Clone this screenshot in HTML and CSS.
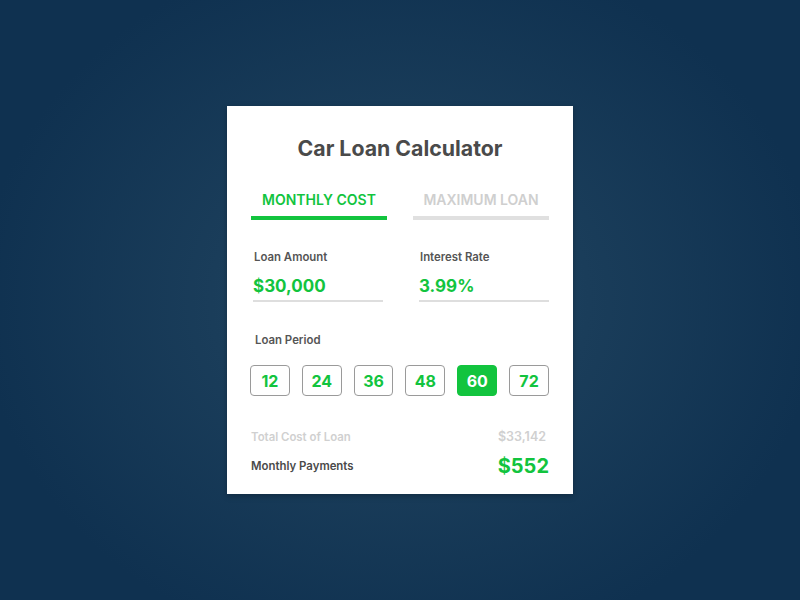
FILE: index.html
```html
<!DOCTYPE html>
<html>
<head>
<meta charset="utf-8">
<link rel="stylesheet" href="styles.css">
</head>
<body>
<div class="card">
  <h1 class="title">Car Loan Calculator</h1>
  <div class="tabs">
    <div class="tab active">MONTHLY COST</div>
    <div class="tab">MAXIMUM LOAN</div>
  </div>
  <div class="fields">
    <div class="field">
      <div class="label">Loan Amount</div>
      <div class="value">$30,000</div>
    </div>
    <div class="field">
      <div class="label">Interest Rate</div>
      <div class="value">3.99%</div>
    </div>
  </div>
  <div class="period-label label">Loan Period</div>
  <div class="periods">
    <div class="period">12</div>
    <div class="period">24</div>
    <div class="period">36</div>
    <div class="period">48</div>
    <div class="period selected">60</div>
    <div class="period">72</div>
  </div>
  <div class="row total">
    <span>Total Cost of Loan</span>
    <span class="total-value">$33,142</span>
  </div>
  <div class="row monthly">
    <span>Monthly Payments</span>
    <span class="monthly-value">$552</span>
  </div>
</div>
</body>
</html>
```
FILE: styles.css
```css
html, body {
  margin: 0;
  height: 100%;
}
body {
  width: 800px;
  height: 600px;
  background: radial-gradient(ellipse 420px 360px at 400px 300px, #234a66 0%, #1a3d5a 45%, #0f3150 100%);
  display: flex;
  align-items: center;
  justify-content: center;
  font-family: "Inter", "Liberation Sans", sans-serif;
  font-weight: 700;
}
.card {
  width: 346px;
  height: 388px;
  box-sizing: border-box;
  background: #fff;
  box-shadow: 0 2px 6px rgba(0,0,0,0.25);
  padding: 28px 24px 0 24px;
}
.title {
  margin: 0;
  text-align: center;
  font-size: 21.3px;
  font-weight: 700;
  color: #4a4a4a;
  line-height: 28px;
}
.tabs {
  display: flex;
  gap: 26px;
  margin-top: 29px;
}
.tab {
  width: 136px;
  text-align: center;
  font-size: 14px;
  font-weight: 600;
  color: #cfcfcf;
  padding-top: 0;
  padding-bottom: 8px;
  line-height: 17px;
  border-bottom: 4px solid #e0e0e0;
}
.tab.active {
  color: #12c43e;
  border-bottom-color: #12c43e;
}
.fields {
  display: flex;
  gap: 36px;
  margin: 30px 0 0 2px;
}
.field {
  width: 130px;
  border-bottom: 2px solid #dedede;
}
.label {
  font-size: 11.4px;
  font-weight: 600;
  color: #555;
  line-height: 14px;
  padding-left: 1px;
}
.value {
  font-size: 17px;
  color: #12c43e;
  line-height: 22px;
  margin-top: 11px;
  padding-bottom: 3px;
}
.period-label {
  margin: 31px 0 0 3px;
}
.periods {
  display: flex;
  gap: 12px;
  margin: 18px 0 0 -1px;
}
.period {
  width: 40px;
  height: 31px;
  box-sizing: border-box;
  border: 1px solid #9a9a9a;
  border-radius: 4px;
  display: flex;
  align-items: center;
  justify-content: center;
  font-size: 16px;
  color: #12c43e;
}
.period.selected {
  background: #12c43e;
  border-color: #12c43e;
  color: #fff;
}
.row {
  display: flex;
  justify-content: space-between;
  align-items: center;
  font-size: 11.4px;
  font-weight: 600;
  line-height: 16px;
}
.total {
  margin-top: 33px;
  color: #d0d0d0;
  padding-right: 3px;
}
.total-value {
  font-size: 12.5px;
}
.monthly {
  margin-top: 8px;
  color: #4a4a4a;
  line-height: 26px;
}
.monthly-value {
  font-size: 20px;
  font-weight: 700;
  color: #12c43e;
}
```
